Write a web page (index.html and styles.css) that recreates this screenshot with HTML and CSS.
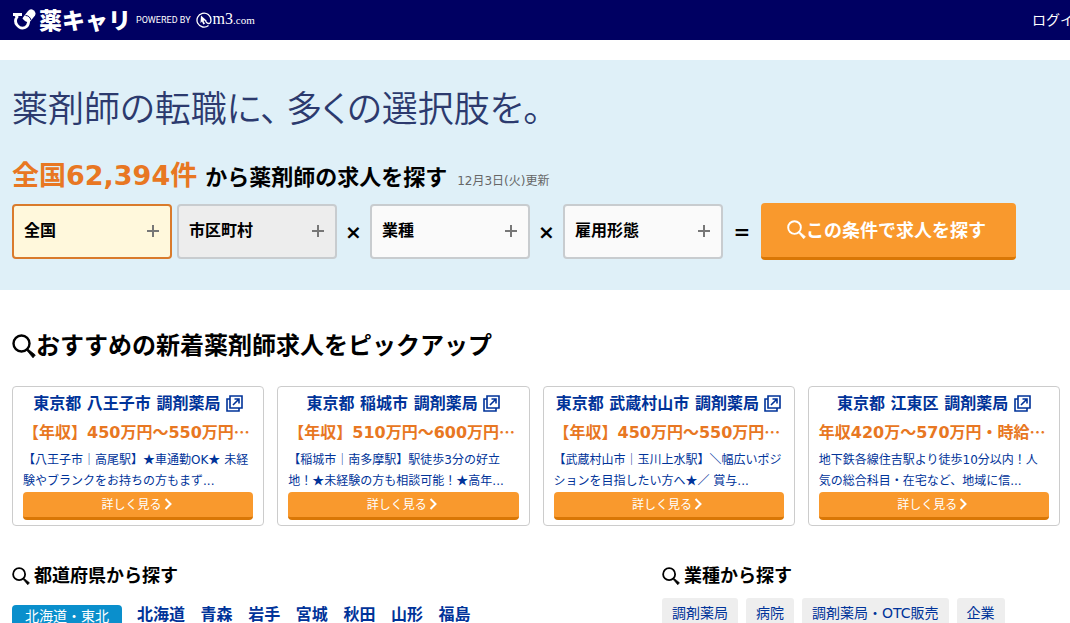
FILE: index.html
```html
<!DOCTYPE html>
<html lang="ja">
<head>
<meta charset="utf-8">
<title>薬キャリ</title>
<link rel="stylesheet" href="styles.css">
</head>
<body>
<svg width="0" height="0" class="defs" aria-hidden="true">
  <symbol id="search" viewBox="0 0 24 24"><circle cx="9.500" cy="9.500" r="8" fill="none" stroke="currentColor" stroke-width="2.400"/><path d="M15 14.500l1.500 1 6.800 5.500-2.300 2.800-5.600-6.800-1.400-1.300z" fill="currentColor" stroke="currentColor" stroke-width=".8"/></symbol>
  <symbol id="window" viewBox="0 0 17 17"><path d="M4 1h12v12H4zM4 4H1v12h12v-3M7 10l6-6M8.500 4H13v4.500" fill="none" stroke="currentColor" stroke-width="1.600"/></symbol>
  <symbol id="chevron" viewBox="0 0 8 12"><path d="M1.500 1l5 5-5 5" fill="none" stroke="currentColor" stroke-width="2"/></symbol>
</svg>
<header class="header">
  <a class="logo" href="#">
    <svg class="capsule" viewBox="0 0 24 24" aria-hidden="true"><path d="M1 6.500h9M3.500 7l1.500 2Q2 13 5 17q3.500 4.500 8 2.500 3-1.500 3.500-5l.5-2" fill="none" stroke="#fff" stroke-width="2.800"/><path d="M11 9.500l5-6.500q2.500-3 5.500-.800t1.500 5.300l-4 5q-3 2.500-6 .5t-2-3.500z" fill="#fff"/><path d="M13.500 7.500q4 0 5.500 4.500" fill="none" stroke="#000062" stroke-width="1"/></svg>
    <span class="name">薬キャリ</span>
    <span class="powered">POWERED BY</span>
    <svg class="at" viewBox="0 0 16 16" aria-hidden="true"><path d="M12.500 13.500A7 7 0 1 1 15 8q0 3.500-2.500 3.500T9.500 8" fill="none" stroke="#fff" stroke-width="1.300"/><path d="M5 3.500l5.500 5-3 .2 1.500 3-1.700.7-1.300-3L4.500 11z" fill="#fff"/></svg>
    <span class="m3">m3<small>.com</small></span>
  </a>
  <nav class="nav"><a href="#">ログイン</a></nav>
</header>
<main>
  <section class="hero">
    <h1 class="catch"><span class="phrase">薬剤師の転職に、</span>多くの選択肢を。</h1>
    <p class="lead"><strong class="count">全国62,394件</strong><b class="from">から薬剤師の求人を探す</b><span class="date">12月3日(火)更新</span></p>
    <form class="search">
      <button type="button" class="pick active">全国<i class="plus"></i></button>
      <button type="button" class="pick off">市区町村<i class="plus"></i></button>
      <span class="op">×</span>
      <button type="button" class="pick">業種<i class="plus"></i></button>
      <span class="op">×</span>
      <button type="button" class="pick">雇用形態<i class="plus"></i></button>
      <span class="op equal">=</span>
      <button type="button" class="submit"><svg><use href="#search"/></svg>この条件で求人を探す</button>
    </form>
  </section>
  <section class="pickup">
    <h2 class="title"><svg><use href="#search"/></svg>おすすめの新着薬剤師求人をピックアップ</h2>
    <div class="cards">
      <article class="card">
        <h3><a href="#">東京都 八王子市 調剤薬局 <svg><use href="#window"/></svg></a></h3>
        <p class="pay">【年収】450万円～550万円<span class="cjk">…</span></p>
        <p class="desc">【八王子市｜高尾駅】<span class="cjk">★</span>車通勤OK<span class="cjk">★</span> 未経<br>験やブランクをお持ちの方もまず...</p>
        <a class="more" href="#">詳しく見る<svg><use href="#chevron"/></svg></a>
      </article>
      <article class="card">
        <h3><a href="#">東京都 稲城市 調剤薬局 <svg><use href="#window"/></svg></a></h3>
        <p class="pay">【年収】510万円～600万円<span class="cjk">…</span></p>
        <p class="desc">【稲城市｜南多摩駅】駅徒歩3分の好立<br>地！<span class="cjk">★</span>未経験の方も相談可能！<span class="cjk">★</span>高年...</p>
        <a class="more" href="#">詳しく見る<svg><use href="#chevron"/></svg></a>
      </article>
      <article class="card">
        <h3><a href="#">東京都 武蔵村山市 調剤薬局 <svg><use href="#window"/></svg></a></h3>
        <p class="pay">【年収】450万円～550万円<span class="cjk">…</span></p>
        <p class="desc">【武蔵村山市｜玉川上水駅】＼幅広いポジ<br>ションを目指したい方へ<span class="cjk">★</span>／ 賞与...</p>
        <a class="more" href="#">詳しく見る<svg><use href="#chevron"/></svg></a>
      </article>
      <article class="card">
        <h3><a href="#">東京都 江東区 調剤薬局 <svg><use href="#window"/></svg></a></h3>
        <p class="pay">年収420万～570万円・時給<span class="cjk">…</span></p>
        <p class="desc">地下鉄各線住吉駅より徒歩10分以内！人<br>気の総合科目・在宅など、地域に信...</p>
        <a class="more" href="#">詳しく見る<svg><use href="#chevron"/></svg></a>
      </article>
    </div>
  </section>
  <div class="finders">
    <section>
      <h2 class="sub"><svg><use href="#search"/></svg>都道府県から探す</h2>
      <div class="region">
        <span class="area">北海道・東北</span>
        <p class="prefs"><a href="#">北海道</a> <a href="#">青森</a> <a href="#">岩手</a> <a href="#">宮城</a> <a href="#">秋田</a> <a href="#">山形</a> <a href="#">福島</a></p>
      </div>
    </section>
    <section>
      <h2 class="sub"><svg><use href="#search"/></svg>業種から探す</h2>
      <div class="chips"><a href="#">調剤薬局</a><a href="#">病院</a><a href="#">調剤薬局・OTC販売</a><a href="#">企業</a></div>
    </section>
  </div>
</main>
</body>
</html>
```
FILE: styles.css
```css
* { box-sizing: border-box; }
body {
  margin: 0;
  height: 100vh;
  overflow: hidden;
  background: #fff;
  color: #000;
  font-family: "DejaVu Sans", "Noto Sans CJK JP", sans-serif;
  font-size: 12px;
}
h1, h2, h3, p { margin: 0; }
a { color: #003399; text-decoration: none; }
button { font-family: inherit; cursor: pointer; }
.defs { position: absolute; }
.cjk { font-family: "Noto Sans CJK JP", sans-serif; line-height: 1px; }

.header {
  display: flex;
  align-items: center;
  height: 40px;
  padding-left: 12px;
  background: #000062;
  overflow: hidden;
}
.logo { display: flex; align-items: center; color: #fff; white-space: nowrap; }
.capsule { width: 24px; height: 24px; margin-right: 3px; }
.name { font: 900 23px/36px "Noto Sans CJK JP", sans-serif; padding-bottom: 2px; }
.powered { margin: 0 5px; font: 9px/40px Roboto, sans-serif; }
.at { width: 16px; height: 16px; }
.m3 { margin-left: 1px; padding-bottom: 2px; font: 16px/36px "Liberation Serif", serif; }
.m3 small { font-size: 11px; }
.nav { flex: 0 0 38px; min-width: 0; margin-left: auto; white-space: nowrap; }
.nav a { color: #fff; font-size: 14px; line-height: 36px; }

.hero {
  margin-top: 20px;
  height: 230px;
  padding: 24px 12px 0;
  background: #dff0f8;
}
.catch {
  color: #2c3a6e;
  font: 350 36px/44px "Noto Sans CJK JP", sans-serif;
  font-feature-settings: "palt";
}
.phrase { margin-right: 8px; }
.lead {
  display: flex;
  align-items: baseline;
  height: 40px;
  margin-top: 28px;
  line-height: 40px;
  white-space: nowrap;
}
.count { color: #e87722; font-size: 27px; }
.from { margin-left: 8px; font-size: 22px; }
.date { margin-left: 10px; color: #666; }
.search { display: flex; align-items: center; margin-top: 7px; }
.pick {
  display: flex;
  justify-content: space-between;
  align-items: center;
  width: 160px;
  height: 55px;
  padding: 0 11px 6px 10px;
  border: 2px solid #c8cccf;
  border-radius: 4px;
  background: #fafafa;
  color: #000;
  font-size: 16px;
  font-weight: bold;
}
.pick.active { border-color: #d97b2c; background: #fff8dc; }
.pick.off { margin-left: 5px; background: #ededed; }
.plus {
  width: 12px;
  height: 12px;
  margin-top: 4px;
  background:
    linear-gradient(#777, #777) center / 12px 2px no-repeat,
    linear-gradient(#777, #777) center / 2px 12px no-repeat;
}
.op { width: 33px; text-align: center; font: bold 20px/24px "DejaVu Sans", sans-serif; }
.equal { width: 38px; }
.submit {
  display: flex;
  justify-content: center;
  align-items: center;
  width: 255px;
  height: 57px;
  padding: 0 4px 2px 0;
  border: 0;
  border-bottom: 3px solid #d97706;
  border-radius: 4px;
  background: #f9992d;
  color: #fff;
  font-size: 18px;
  font-weight: bold;
}
.submit svg { width: 19px; height: 19px; }

.pickup { padding: 38px 10px 0 12px; }
.title { display: flex; align-items: center; font-size: 24px; line-height: 36px; }
.title svg { width: 24px; height: 24px; }
.cards { display: grid; grid-template-columns: repeat(4, 1fr); gap: 13px; margin-top: 22px; }
.card {
  min-width: 0;
  padding: 4px 10px 5px;
  border: 1px solid #ccc;
  border-radius: 4px;
}
.card h3 { font-size: 16px; line-height: 26px; text-align: center; white-space: nowrap; }
.card h3 svg { width: 17px; height: 17px; vertical-align: -3px; }
.pay { color: #e87722; font-size: 16px; font-weight: bold; line-height: 32px; white-space: nowrap; }
.desc { padding-top: 1px; color: #003399; line-height: 21px; white-space: nowrap; }
.more {
  display: flex;
  justify-content: center;
  align-items: center;
  height: 28px;
  padding: 0 3px 2px 0;
  border-bottom: 3px solid #d97706;
  border-radius: 4px;
  background: #f9992d;
  color: #fff;
}
.more svg { width: 8px; height: 12px; margin-left: 2px; }

.finders { display: grid; grid-template-columns: 650px 1fr; padding: 37px 10px 0 12px; }
.sub { display: flex; align-items: center; gap: 4px; font-size: 18px; line-height: 26px; }
.sub svg { width: 18px; height: 18px; }
.region { display: flex; align-items: flex-start; margin-top: 16px; }
.area {
  padding: 0 13px;
  border-radius: 4px;
  background: #0a8fcc;
  color: #fff;
  font-size: 14px;
  line-height: 22px;
}
.prefs { margin-left: 15px; font-size: 16px; font-weight: bold; line-height: 20px; }
.prefs a { margin-right: 10px; }
.chips { display: flex; gap: 8px; margin-top: 9px; }
.chips a {
  padding: 0 10px;
  border-radius: 3px;
  background: #eee;
  font-size: 14px;
  line-height: 30px;
}
```
